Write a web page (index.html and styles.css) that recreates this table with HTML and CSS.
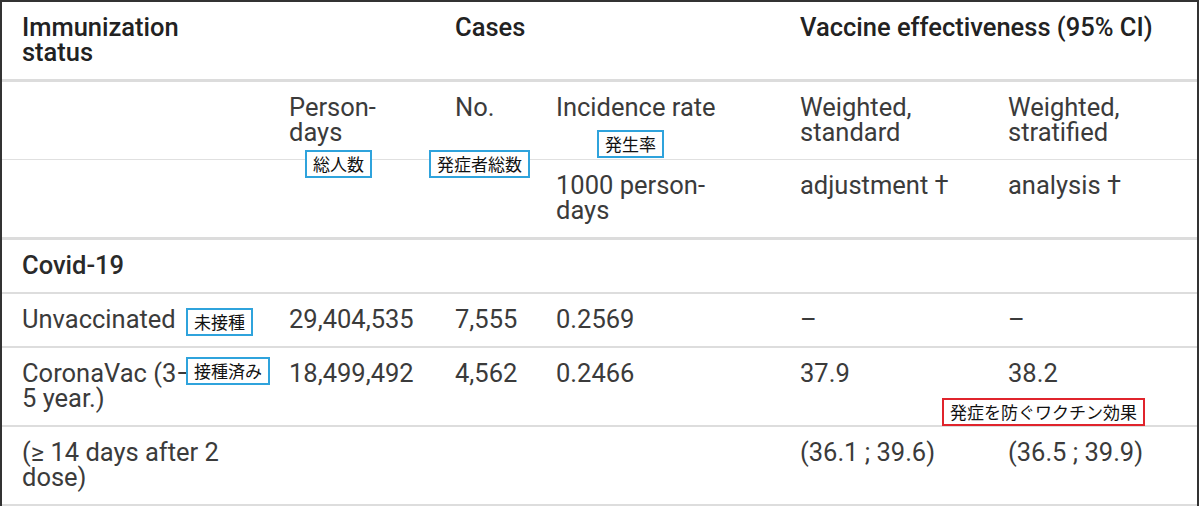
FILE: index.html
```html
<!DOCTYPE html>
<html lang="ja">
<head>
<meta charset="utf-8">
<title>Vaccine effectiveness</title>
<link rel="stylesheet" href="styles.css">
</head>
<body>
<div class="wrap">
  <table class="ve-table">
    <colgroup>
      <col class="c1"><col class="c2"><col class="c3"><col class="c4"><col class="c5"><col class="c6">
    </colgroup>
    <thead>
      <tr class="head-top">
        <th>Immunization<br>status</th>
        <th></th>
        <th colspan="2">Cases</th>
        <th colspan="2">Vaccine effectiveness (95% CI)</th>
      </tr>
      <tr class="head-mid">
        <td></td>
        <td>Person-<br>days</td>
        <td>No.</td>
        <td>Incidence rate</td>
        <td>Weighted,<br>standard</td>
        <td>Weighted,<br>stratified</td>
      </tr>
      <tr class="head-low">
        <td></td>
        <td></td>
        <td></td>
        <td>1000 person-<br>days</td>
        <td>adjustment †</td>
        <td>analysis †</td>
      </tr>
    </thead>
    <tbody>
      <tr class="group">
        <td class="group-name">Covid-19</td>
        <td></td><td></td><td></td><td></td><td></td>
      </tr>
      <tr>
        <td>Unvaccinated</td>
        <td>29,404,535</td>
        <td>7,555</td>
        <td>0.2569</td>
        <td>–</td>
        <td>–</td>
      </tr>
      <tr>
        <td>CoronaVac (3–<br>5 year.)</td>
        <td>18,499,492</td>
        <td>4,562</td>
        <td>0.2466</td>
        <td>37.9</td>
        <td>38.2</td>
      </tr>
      <tr class="last">
        <td>(≥ 14 days after 2<br>dose)</td>
        <td></td>
        <td></td>
        <td></td>
        <td>(36.1 ; 39.6)</td>
        <td>(36.5 ; 39.9)</td>
      </tr>
    </tbody>
  </table>

  <span class="tag tag-blue tag-persondays">総人数</span>
  <span class="tag tag-blue tag-cases">発症者総数</span>
  <span class="tag tag-blue tag-rate">発生率</span>
  <span class="tag tag-blue tag-unvax">未接種</span>
  <span class="tag tag-blue tag-vax">接種済み</span>
  <span class="tag tag-red tag-effect">発症を防ぐワクチン効果</span>
</div>
</body>
</html>
```

FILE: styles.css
```css
html, body {
  margin: 0;
  padding: 0;
  background: #ffffff;
}

.wrap {
  position: relative;
  width: 1199px;
}

.ve-table {
  width: 1199px;
  table-layout: fixed;
  border-collapse: separate;
  border-spacing: 0;
  border-top: 2px solid #333333;
  border-left: 2px solid #333333;
  border-right: 2px solid #333333;
  font-family: Roboto, "Noto Sans", "Liberation Sans", sans-serif;
  font-size: 25.5px;
  line-height: 25px;
  color: #3b3b3b;
}

.c1 { width: 267px; }
.c2 { width: 166px; }
.c3 { width: 101px; }
.c4 { width: 244px; }
.c5 { width: 208px; }
.c6 { width: 209px; }

.ve-table th,
.ve-table td {
  text-align: left;
  vertical-align: top;
  padding: 13px 20px 14px 20px;
  border-bottom: 2px solid #dddddd;
  white-space: nowrap;
}

.ve-table th {
  font-weight: 500;
  color: #222222;
}

.head-top th {
  border-bottom: 3px solid #dcdcdc;
}

.head-mid td {
  border-bottom: 1px solid #e0e0e0;
}

.head-low td {
  border-bottom: 3px solid #dcdcdc;
}

.group-name {
  font-weight: 500;
  color: #2a2a2a;
}

.tag {
  position: absolute;
  box-sizing: border-box;
  height: 28px;
  padding: 0 6px;
  border: 2px solid #2fa3dc;
  background: #ffffff;
  color: #111111;
  font-family: "Noto Sans CJK JP", "Noto Sans", sans-serif;
  font-size: 17px;
  line-height: 24px;
  white-space: nowrap;
}

.tag-red {
  border-color: #e0242c;
}

.tag-persondays { left: 305px; top: 150px; }
.tag-cases      { left: 429px; top: 150px; }
.tag-rate       { left: 597px; top: 130px; }
.tag-unvax      { left: 186px; top: 308px; }
.tag-vax        { left: 186px; top: 357px; }
.tag-effect     { left: 942px; top: 398px; }
```
